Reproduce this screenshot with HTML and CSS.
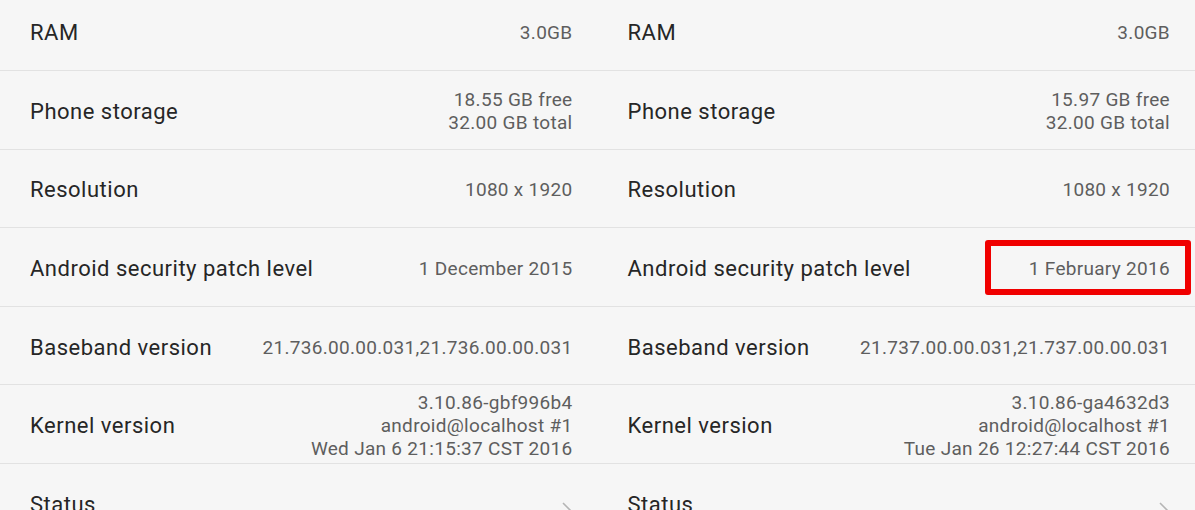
FILE: index.html
```html
<!DOCTYPE html>
<html lang="en">
<head>
    <meta charset="UTF-8">
    <title>About phone</title>
    <link rel="stylesheet" href="styles.css">
</head>
<body>

    <div class="compare">
        <!-- before update -->
        <ul class="info-list">
            <li class="info-row">
                <span class="info-title">RAM</span>
                <span class="info-value">3.0GB</span>
            </li>
            <li class="info-row">
                <span class="info-title">Phone storage</span>
                <span class="info-value">18.55 GB free<br>32.00 GB total</span>
            </li>
            <li class="info-row">
                <span class="info-title">Resolution</span>
                <span class="info-value">1080 x 1920</span>
            </li>
            <li class="info-row">
                <span class="info-title">Android security patch level</span>
                <span class="info-value">1 December 2015</span>
            </li>
            <li class="info-row">
                <span class="info-title">Baseband version</span>
                <span class="info-value">21.736.00.00.031,21.736.00.00.031</span>
            </li>
            <li class="info-row">
                <span class="info-title">Kernel version</span>
                <span class="info-value">3.10.86-gbf996b4<br>android@localhost #1<br>Wed Jan 6 21:15:37 CST 2016</span>
            </li>
            <li class="info-row">
                <span class="info-title">Status</span>
                <svg class="chevron" width="12" height="20" viewBox="0 0 12 20"><path d="M2 2l8 8-8 8" fill="none" stroke="#b5b5b5" stroke-width="1.6"/></svg>
            </li>
        </ul>

        <!-- after update -->
        <ul class="info-list">
            <li class="info-row">
                <span class="info-title">RAM</span>
                <span class="info-value">3.0GB</span>
            </li>
            <li class="info-row">
                <span class="info-title">Phone storage</span>
                <span class="info-value">15.97 GB free<br>32.00 GB total</span>
            </li>
            <li class="info-row">
                <span class="info-title">Resolution</span>
                <span class="info-value">1080 x 1920</span>
            </li>
            <li class="info-row">
                <span class="info-title">Android security patch level</span>
                <span class="info-value">1 February 2016</span>
                <span class="highlight"></span>
            </li>
            <li class="info-row">
                <span class="info-title">Baseband version</span>
                <span class="info-value">21.737.00.00.031,21.737.00.00.031</span>
            </li>
            <li class="info-row">
                <span class="info-title">Kernel version</span>
                <span class="info-value">3.10.86-ga4632d3<br>android@localhost #1<br>Tue Jan 26 12:27:44 CST 2016</span>
            </li>
            <li class="info-row">
                <span class="info-title">Status</span>
                <svg class="chevron" width="12" height="20" viewBox="0 0 12 20"><path d="M2 2l8 8-8 8" fill="none" stroke="#b5b5b5" stroke-width="1.6"/></svg>
            </li>
        </ul>
    </div>

</body>
</html>
```

FILE: styles.css
```css
:root {
    --background-color: #f6f6f6;
    --divider-color: #e2e2e2;
    --title-color: #262626;
    --value-color: #5e5e5e;
    --mark-color: #f00000;
}

body {
    font-family: Roboto, "Noto Sans", sans-serif;
    background-color: var(--background-color);
    margin: 0;
    padding: 0;
    height: 510px;
    overflow: hidden;
}

.compare {
    display: grid;
    grid-template-columns: 1fr 1fr;
    margin-top: -7.6px;
}

.info-list {
    list-style: none;
    margin: 0;
    padding: 0;
}

.info-row {
    position: relative;
    display: flex;
    align-items: center;
    justify-content: space-between;
    gap: 20px;
    height: 78.6px;
    box-sizing: border-box;
    padding: 3px 25px 0 30px;
    border-bottom: 1px solid var(--divider-color);
}

.info-title {
    font-size: 22px;
    letter-spacing: 0.5px;
    color: var(--title-color);
    white-space: nowrap;
}

.info-value {
    font-size: 19px;
    letter-spacing: 0.3px;
    line-height: 23px;
    color: var(--value-color);
    text-align: right;
    white-space: nowrap;
}

.chevron {
    margin-top: 14px;
    margin-right: 0;
}

/* red annotation box drawn over the screenshot */
.highlight {
    position: absolute;
    top: 12px;
    right: 4px;
    width: 206px;
    height: 55px;
    box-sizing: border-box;
    border: 6px solid var(--mark-color);
    border-radius: 3px;
}
```
